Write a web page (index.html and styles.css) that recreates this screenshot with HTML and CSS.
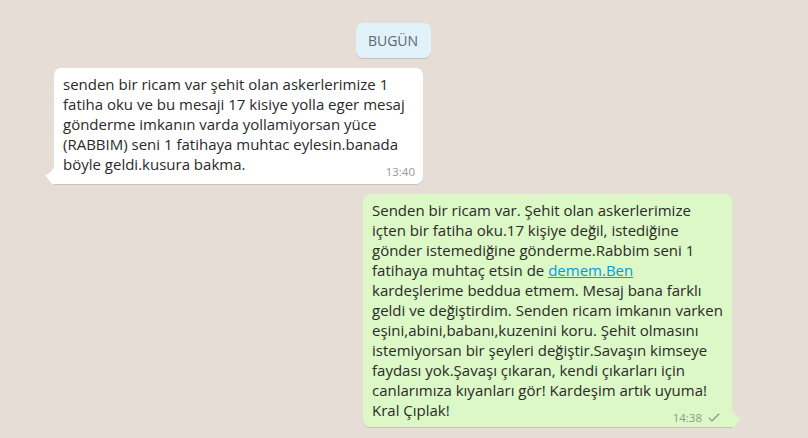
FILE: index.html
```html
<!DOCTYPE html>
<html lang="tr">
<head>
    <meta charset="UTF-8">
    <meta name="viewport" content="width=device-width, initial-scale=1.0">
    <title>Sohbet</title>
    <link rel="stylesheet" href="styles.css">
</head>
<body>

<div class="chat">
    <div class="day">
        <span class="day-chip">BUGÜN</span>
    </div>

    <div class="row row-in">
        <div class="bubble bubble-in">
            <svg class="tail tail-in" width="10" height="18" viewBox="0 0 10 18">
                <path d="M10 0 L10 18 L7 18 C5 16 3 12 0 9 C4 8 7 5 10 0 Z" fill="#fff"/>
            </svg>
            <div class="text">senden bir ricam var şehit olan askerlerimize 1<br>fatiha oku ve bu mesaji 17 kisiye yolla eger mesaj<br>gönderme imkanın varda yollamiyorsan yüce<br>(RABBIM) seni 1 fatihaya muhtac eylesin.banada<br>böyle geldi.kusura bakma.</div>
            <div class="meta">13:40</div>
        </div>
    </div>

    <div class="row row-out">
        <div class="bubble bubble-out">
            <svg class="tail tail-out" width="10" height="18" viewBox="0 0 10 18">
                <path d="M0 0 L0 18 L3 18 C5 16 7 12 10 9 C6 8 3 5 0 0 Z" fill="#dcf8c6"/>
            </svg>
            <div class="text">Senden bir ricam var. Şehit olan askerlerimize<br>içten bir fatiha oku.17 kişiye değil, istediğine<br>gönder istemediğine gönderme.Rabbim seni 1<br>fatihaya muhtaç etsin de <a href="#">demem.Ben</a><br>kardeşlerime beddua etmem. Mesaj bana farklı<br>geldi ve değiştirdim. Senden ricam imkanın varken<br>eşini,abini,babanı,kuzenini koru. Şehit olmasını<br>istemiyorsan bir şeyleri değiştir.Savaşın kimseye<br>faydası yok.Şavaşı çıkaran, kendi çıkarları için<br>canlarımıza kıyanları gör! Kardeşim artık uyuma!<br>Kral Çıplak!</div>
            <div class="meta">14:38
                <svg class="tick" width="12" height="9" viewBox="0 0 12 9">
                    <path d="M0.8 4.6 L4 7.8 L11.2 0.8" fill="none" stroke="#8b9a8b" stroke-width="1.2"/>
                </svg>
            </div>
        </div>
    </div>
</div>

</body>
</html>
```

FILE: styles.css
```css
body {
    margin: 0;
    background-color: #e5ddd6;
    font-family: "Open Sans", "Segoe UI", Roboto, sans-serif;
    color: #2a2a2a;
}

.chat {
    height: 438px;
    overflow: hidden;
    padding-top: 23px;
    box-sizing: border-box;
}

.day {
    display: flex;
    justify-content: center;
    padding-right: 22px;
}

.day-chip {
    display: inline-block;
    width: 75px;
    height: 35px;
    line-height: 35px;
    text-align: center;
    background-color: #e1f2fa;
    color: #5b6870;
    font-size: 14px;
    border-radius: 7px;
    box-shadow: 0 1px 0.5px rgba(0, 0, 0, 0.13);
}

.row {
    display: flex;
    margin-top: 10px;
}

.row-in {
    padding-left: 54px;
}

.row-out {
    justify-content: flex-end;
    padding-right: 76px;
}

.bubble {
    position: relative;
    width: 369px;
    box-sizing: border-box;
    padding: 6px 8px 5px 9px;
    border-radius: 7px;
    box-shadow: 0 1px 0.5px rgba(0, 0, 0, 0.13);
    font-size: 15px;
    line-height: 20px;
}

.bubble-in {
    background-color: #fff;
    border-bottom-left-radius: 0;
}

.bubble-out {
    background-color: #dcf8c6;
    border-bottom-right-radius: 0;
    padding-bottom: 2px;
    padding-right: 12px;
}

.text {
    white-space: nowrap;
}

.tail {
    position: absolute;
    bottom: 0;
}

.tail-in {
    left: -9px;
}

.tail-out {
    right: -9px;
}

.text a {
    color: #039be5;
}

.meta {
    margin-top: -10px;
    text-align: right;
    font-size: 11.5px;
    line-height: 15px;
    color: #999;
}

.bubble-out .meta {
    color: #8b9a8b;
}

.tick {
    margin-left: 3px;
    vertical-align: 0;
}
```
